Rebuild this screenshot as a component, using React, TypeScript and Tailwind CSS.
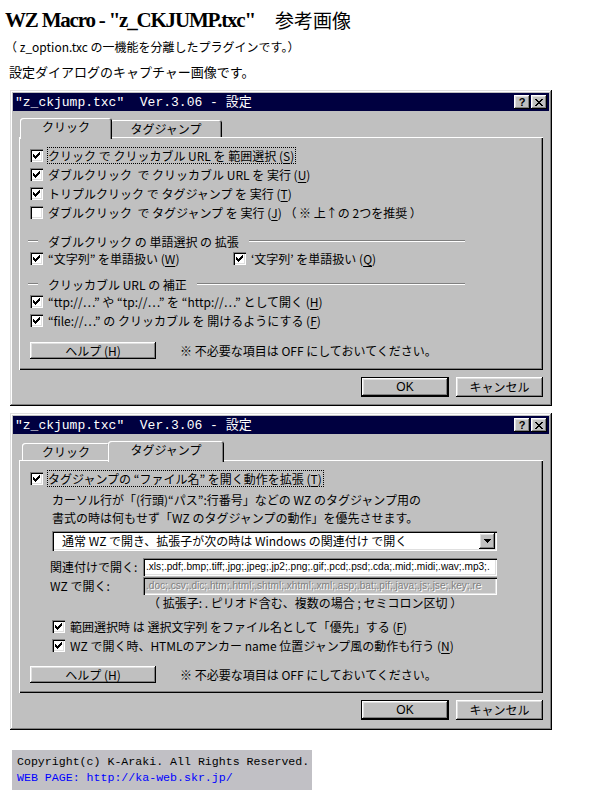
import React from 'react';

const frame = 'shadow-[inset_-1px_-1px_#000,inset_1px_1px_#dfdfdf,inset_-2px_-2px_#808080,inset_2px_2px_#fff]';
const raised = 'shadow-[inset_-1px_-1px_#000,inset_1px_1px_#fff,inset_-2px_-2px_#808080,inset_2px_2px_#dfdfdf]';
const sunken = 'shadow-[inset_1px_1px_#808080,inset_2px_2px_#000,inset_-1px_-1px_#fff,inset_-2px_-2px_#dfdfdf]';

const Check = ({ on = true }: { on?: boolean }) => (
  <span className={`w-[13px] h-[13px] bg-white shrink-0 flex items-center justify-center ${sunken}`}>
    {on && (
      <svg width="7" height="7" viewBox="0 0 7 7" shapeRendering="crispEdges">
        <path d="M0 2h1v3H0z M1 3h1v3H1z M2 4h1v3H2z M3 3h1v3H3z M4 2h1v3H4z M5 1h1v3H5z M6 0h1v3H6z" fill="#000" />
      </svg>
    )}
  </span>
);

const U = ({ c }: { c: string }) => (
  <>
    (<span className="underline underline-offset-2">{c}</span>)
  </>
);

const Row = ({ on = true, focus = false, children, className = '' }: { on?: boolean; focus?: boolean; children: React.ReactNode; className?: string }) => (
  <div className={`flex items-center h-[19px] ${className}`}>
    <Check on={on} />
    <span className={`whitespace-pre leading-[15px] ${focus ? 'ml-[4px] border border-dotted border-black pr-[1px]' : 'ml-[5px]'}`}>{children}</span>
  </div>
);

const Etched = ({ className = '' }: { className?: string }) => (
  <div className={`h-[2px] border-t border-t-[#808080] border-b border-b-white ${className}`} />
);

const Group = ({ children, className = '' }: { children: React.ReactNode; className?: string }) => (
  <div className={`flex items-center h-[16px] w-[437px] -ml-[2px] ${className}`}>
    <Etched className="w-[10px]" />
    <span className="whitespace-pre px-[10px] leading-[15px]">{children}</span>
    <Etched className="flex-1" />
  </div>
);

const Help = ({ className = '' }: { className?: string }) => (
  <div className={`flex items-center ${className}`}>
    <div className={`w-[126px] h-[17px] bg-[#c0c0c0] flex items-center justify-center whitespace-pre leading-none ${raised}`}>
      ヘルプ <U c="H" />
    </div>
    <span className="ml-[24px] whitespace-pre leading-[15px]">※ 不必要な項目は OFF にしておいてください。</span>
  </div>
);

const XGlyph = () => (
  <svg width="8" height="7" viewBox="0 0 8 7" shapeRendering="crispEdges">
    <path d="M0 0h2v1H0z M6 0h2v1H6z M1 1h2v1H1z M5 1h2v1H5z M2 2h4v1H2z M3 3h2v1H3z M2 4h4v1H2z M1 5h2v1H1z M5 5h2v1H5z M0 6h2v1H0z M6 6h2v1H6z" fill="#000" />
  </svg>
);

const Tab = ({ sel, w, ws, children }: { sel: boolean; w: string; ws: string; children: React.ReactNode }) => (
  <div
    className={`relative bg-[#c0c0c0] rounded-t-[3px] shadow-[inset_1px_1px_#fff,inset_-1px_0_#000,inset_-2px_0_#808080] flex items-center justify-center leading-none ${
      sel ? `h-[21px] -mx-[2px] mb-[-2px] z-10 pb-[3px] ${ws}` : `h-[17px] ${w}`
    }`}
  >
    {children}
  </div>
);

const Dialog = ({ tab, className = '', children }: { tab: 0 | 1; className?: string; children: React.ReactNode }) => (
  <div className={`w-[542px] ml-[10px] bg-[#c0c0c0] p-[3px] ${frame} ${className}`}>
    <div className="h-[18px] bg-[#000040] flex items-center justify-between pl-[2px] pr-[2px]">
      <span className="text-white text-[13px] leading-none whitespace-pre font-['Liberation_Mono','Noto_Sans_CJK_JP',monospace]">
        {'"z_ckjump.txc"  Ver.3.06 - 設定'}
      </span>
      <div className="flex gap-[1px]">
        <div className={`w-[16px] h-[14px] bg-[#c0c0c0] flex items-center justify-center text-[11px] font-bold leading-none font-['Liberation_Sans',sans-serif] ${raised}`}>?</div>
        <div className={`w-[16px] h-[14px] bg-[#c0c0c0] flex items-center justify-center ${raised}`}>
          <XGlyph />
        </div>
      </div>
    </div>
    <div className="px-[6px] pt-[7px]">
      <div className="flex items-end h-[19px] pl-[3px]">
        <Tab sel={tab === 0} w="w-[88px]" ws="w-[92px]">クリック</Tab>
        <Tab sel={tab === 1} w="w-[112px]" ws="w-[116px]">タグジャンプ</Tab>
      </div>
      <div className="h-[233px] pl-[11px] pt-[9px] shadow-[inset_1px_1px_#fff,inset_-1px_-1px_#000,inset_-2px_-2px_#808080]">
        {children}
      </div>
      <div className="flex justify-end gap-[7px] mt-[7px]">
        <div className={`w-[88px] h-[20px] border border-black bg-[#c0c0c0] flex items-center justify-center leading-none font-['Liberation_Sans',sans-serif] ${raised}`}>OK</div>
        <div className={`w-[87px] h-[20px] bg-[#c0c0c0] flex items-center justify-center leading-none ${raised}`}>キャンセル</div>
      </div>
    </div>
  </div>
);

const Field = ({ children, disabled = false }: { children: React.ReactNode; disabled?: boolean }) => (
  <div className={`w-[354px] h-[18px] ${disabled ? 'bg-[#c0c0c0] text-[#808080] [text-shadow:1px_1px_0_#fff]' : 'bg-white text-black'} ${sunken} flex items-center pl-[3px] pr-[2px] overflow-hidden`}>
    <span className="whitespace-nowrap text-[10.1px] leading-none font-['Liberation_Sans',sans-serif]">{children}</span>
  </div>
);

export default function App() {
  return (
    <div className="w-[600px] h-[800px] bg-white overflow-hidden text-black text-[12px] font-['Noto_Sans_CJK_JP',sans-serif]">
      <div className="pl-[5px] pt-[6px] h-[34px] flex items-end whitespace-pre">
        <span className="font-['Liberation_Serif',serif] font-bold text-[21px] tracking-[-1.2px] leading-[28px]">WZ Macro - "z_CKJUMP.txc"</span>
        <span className="ml-[20px] text-[19px] leading-[28px]">参考画像</span>
      </div>
      <div className="pl-[5px] mt-[3px] h-[20px] leading-[20px] whitespace-pre">（ z_option.txc の一機能を分離したプラグインです。）</div>
      <div className="pl-[9px] mt-[5px] h-[20px] leading-[20px] text-[13px] whitespace-pre">設定ダイアログのキャプチャー画像です。</div>

      <Dialog tab={0} className="mt-[8px] h-[316px]">
        <Row focus>クリック で クリッカブル URL を 範囲選択 <U c="S" /></Row>
        <Row>ダブルクリック  で クリッカブル URL を 実行 <U c="U" /></Row>
        <Row>トリプルクリック で タグジャンプ を 実行 <U c="T" /></Row>
        <Row on={false}>ダブルクリック  で タグジャンプ を 実行 <U c="J" /> （ ※ 上↑の 2つを推奨 ）</Row>
        <Group className="mt-[11px]">ダブルクリック の 単語選択 の 拡張</Group>
        <div className="flex items-center h-[19px]">
          <div className="w-[203px]">
            <Row>“文字列” を単語扱い <U c="W" /></Row>
          </div>
          <Row>‘文字列’ を単語扱い <U c="Q" /></Row>
        </div>
        <Group className="mt-[8px]">クリッカブル URL の 補正</Group>
        <Row>“ttp://…” や “tp://…” を “http://…” として開く <U c="H" /></Row>
        <Row>“file://…” の クリッカブル を 開けるようにする <U c="F" /></Row>
        <Help className="mt-[12px]" />
      </Dialog>

      <Dialog tab={1} className="mt-[7px] h-[317px]">
        <Row focus>タグジャンプの “ファイル名” を開く動作を拡張 <U c="T" /></Row>
        <div className="ml-[22px] mt-[3px] leading-[18px] whitespace-pre">
          <div>カーソル行が「(行頭)“パス”:行番号」などの WZ のタグジャンプ用の</div>
          <div>書式の時は何もせず「WZ のタグジャンプの動作」を優先させます。</div>
        </div>
        <div className={`ml-[22px] mt-[4px] w-[445px] h-[20px] bg-white ${sunken} flex items-center pl-[10px] pr-[2px]`}>
          <span className="flex-1 whitespace-pre leading-none">通常 WZ で開き、拡張子が次の時は Windows の関連付け で開く</span>
          <div className={`w-[16px] h-[16px] bg-[#c0c0c0] flex items-center justify-center ${raised}`}>
            <svg width="7" height="4" viewBox="0 0 7 4" shapeRendering="crispEdges">
              <path d="M0 0h7v1H0z M1 1h5v1H1z M2 2h3v1H2z M3 3h1v1H3z" fill="#000" />
            </svg>
          </div>
        </div>
        <div className="flex items-center mt-[7px] ml-[20px]">
          <span className="w-[93px] whitespace-pre leading-none">関連付けで開く:</span>
          <Field>.xls;.pdf;.bmp;.tiff;.jpg;.jpeg;.jp2;.png;.gif;.pcd;.psd;.cda;.mid;.midi;.wav;.mp3;.</Field>
        </div>
        <div className="flex items-center mt-[1px] ml-[20px]">
          <span className="w-[93px] whitespace-pre leading-none">WZ で開く:</span>
          <Field disabled>.doc;.csv;.dic;.htm;.html;.shtml;.xhtml;.xml;.asp;.bat;.pif;.java;.js;.jse;.key;.re</Field>
        </div>
        <div className="ml-[118px] h-[15px] leading-[15px] whitespace-pre">（ 拡張子: . ピリオド含む、複数の場合 ; セミコロン区切 ）</div>
        <div className="ml-[22px] mt-[7px]">
          <Row>範囲選択時 は 選択文字列 をファイル名として「優先」する <U c="F" /></Row>
          <Row>WZ で開く時、HTMLのアンカー name 位置ジャンプ風の動作も行う <U c="N" /></Row>
        </div>
        <Help className="mt-[11px]" />
      </Dialog>

      <div className="ml-[12px] mt-[20px] w-[300px] h-[40px] bg-[#c1c0c5] pl-[5px] pt-[4px] text-[11.6px] leading-[16px] whitespace-pre font-['Liberation_Mono',monospace]">
        <div>Copyright(c) K-Araki. All Rights Reserved.</div>
        <div className="text-[#0000ff]">WEB PAGE: http://ka-web.skr.jp/</div>
      </div>
    </div>
  );
}
